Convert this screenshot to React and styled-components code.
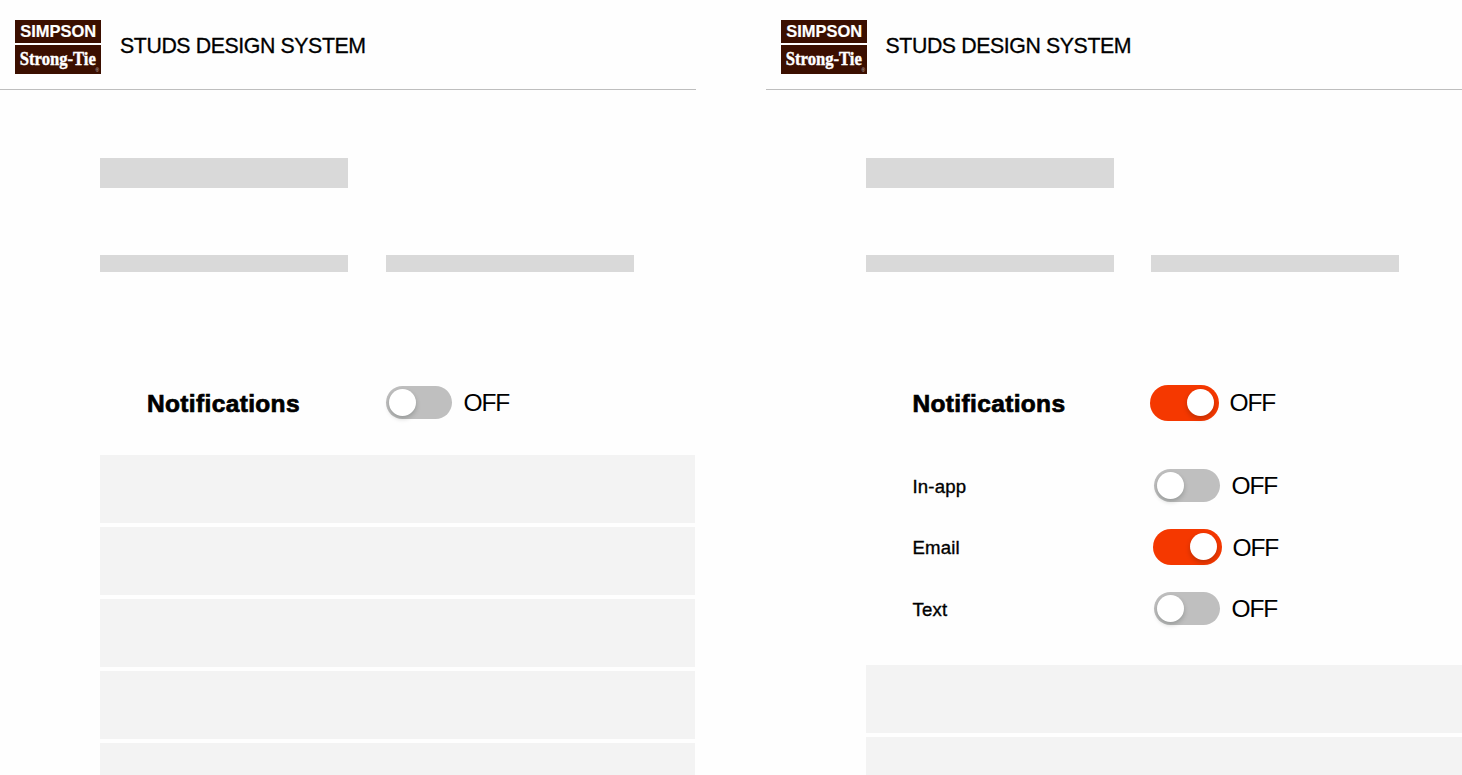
import React from 'react';
import styled, { createGlobalStyle } from 'styled-components';

const GlobalStyle = createGlobalStyle`
  * { box-sizing: border-box; }
  body {
    margin: 0;
    background: #fefefe;
    color: #000;
    font-family: "Liberation Sans", Arial, sans-serif;
    overflow: hidden;
  }
`;

const Page = styled.main`
  display: flex;
  gap: 69.5px;
  width: 100vw;
  height: 100vh;
  overflow: hidden;
`;

const Panel = styled.section`
  flex: 0 0 696px;
  display: flex;
  flex-direction: column;
`;

const Header = styled.header`
  flex: none;
  display: flex;
  align-items: flex-start;
  height: 90px;
  padding: 20px 0 0 15px;
  border-bottom: 1px solid #bebebe;
`;

const LogoMark = styled.svg`
  display: block;
  flex: none;
`;

const Title = styled.h1`
  margin: 13px 0 0 19px;
  font-size: 21.3px;
  line-height: 26px;
  font-weight: 400;
  letter-spacing: -0.4px;
  white-space: nowrap;
  -webkit-text-stroke: 0.3px #000;
`;

const Content = styled.div`
  flex: none;
  padding: 68px 0 0 100px;
`;

const BarRow = styled.div`
  display: flex;
  gap: 37.5px;
  margin-bottom: ${(p) => p.$after}px;
`;

const Bar = styled.div`
  width: 248px;
  height: ${(p) => p.$height}px;
  background: #d9d9d9;
`;

const Setting = styled.div`
  display: grid;
  grid-template-columns: 237px 1fr;
  align-items: center;
  height: ${(p) => p.$height}px;
  padding-left: 47.5px;
`;

const Heading = styled.h2`
  margin: 2px 0 0 -0.5px;
  font-size: 24.5px;
  line-height: 30px;
  font-weight: 700;
  letter-spacing: 0.35px;
  -webkit-text-stroke: 0.7px #000;
`;

const Label = styled.span`
  margin: 3px 0 0 -0.5px;
  font-size: 18.6px;
  line-height: 24px;
  letter-spacing: 0.15px;
  -webkit-text-stroke: 0.35px #000;
`;

const Control = styled.div`
  display: flex;
  align-items: center;
  gap: ${(p) => (p.$on ? 10.5 : 11.5)}px;
  padding-left: ${(p) => p.$inset}px;
`;

const Track = styled.button`
  flex: none;
  display: flex;
  align-items: center;
  justify-content: ${(p) => (p.$on ? 'flex-end' : 'flex-start')};
  width: ${(p) => (p.$on ? 69 : 66)}px;
  height: ${(p) => (p.$on ? 36 : 33)}px;
  padding: 0 ${(p) => (p.$on ? 5 : 3)}px;
  border: 0;
  border-radius: 18px;
  background: ${(p) => (p.$on ? '#f53800' : '#bfbfbf')};
`;

const Knob = styled.span`
  width: 27px;
  height: 27px;
  border-radius: 50%;
  background: #fff;
  box-shadow: 0 2.5px 5px rgba(0, 20, 15, 0.22);
`;

const State = styled.span`
  margin-top: 1.5px;
  font-size: 24.5px;
  line-height: 30px;
  letter-spacing: -1.1px;
`;

const SubSettings = styled.div`
  padding-top: 18.5px;
  height: 229px;
`;

const Blocks = styled.div`
  display: flex;
  flex-direction: column;
  gap: 4.5px;
  width: ${(p) => p.$width}px;
  margin-top: ${(p) => p.$before}px;
`;

const Block = styled.div`
  height: 67.5px;
  background: #f3f3f3;
`;

function Logo() {
  return (
    <LogoMark width="86" height="54" viewBox="0 0 86 54" role="img" aria-label="Simpson Strong-Tie">
      <rect width="86" height="23" fill="#3b0f00" />
      <rect y="25" width="86" height="29" fill="#3b0f00" />
      <text x="5.2" y="17.4" fill="#fff" stroke="#fff" strokeWidth="0.2" fontFamily="Liberation Sans, sans-serif" fontWeight="700" fontSize="16.5" textLength="76" lengthAdjust="spacingAndGlyphs">SIMPSON</text>
      <text x="4.8" y="44.6" fill="#fff" stroke="#fff" strokeWidth="0.4" fontFamily="Liberation Serif, serif" fontWeight="700" fontSize="17.8" textLength="76" lengthAdjust="spacingAndGlyphs">Strong-Tie</text>
      <text x="80.6" y="52" fill="#d8cbc7" fontFamily="Liberation Sans, sans-serif" fontSize="4.8">®</text>
    </LogoMark>
  );
}

function Toggle({ on, inset = 0 }) {
  return (
    <Control $on={on} $inset={inset}>
      <Track type="button" role="switch" aria-checked={!!on} $on={on}>
        <Knob />
      </Track>
      <State>OFF</State>
    </Control>
  );
}

const channels = [
  { name: 'In-app', on: false },
  { name: 'Email', on: true },
  { name: 'Text', on: false },
];

function Screen({ enabled, blocks }) {
  return (
    <Panel>
      <Header>
        <Logo />
        <Title>STUDS DESIGN SYSTEM</Title>
      </Header>
      <Content>
        <BarRow $after={67}>
          <Bar $height={30} />
        </BarRow>
        <BarRow $after={97}>
          <Bar $height={17} />
          <Bar $height={17} />
        </BarRow>
        <Setting $height={67}>
          <Heading>Notifications</Heading>
          <Toggle on={enabled} inset={enabled ? 0 : 1.5} />
        </Setting>
        {enabled && (
          <SubSettings>
            {channels.map((c) => (
              <Setting key={c.name} $height={61.5}>
                <Label>{c.name}</Label>
                <Toggle on={c.on} inset={c.on ? 3 : 4} />
              </Setting>
            ))}
          </SubSettings>
        )}
        <Blocks $width={enabled ? 597 : 595} $before={enabled ? 0 : 19}>
          {Array.from({ length: blocks }, (_, i) => (
            <Block key={i} />
          ))}
        </Blocks>
      </Content>
    </Panel>
  );
}

export default function App() {
  return (
    <>
      <GlobalStyle />
      <Page>
        <Screen enabled={false} blocks={5} />
        <Screen enabled blocks={2} />
      </Page>
    </>
  );
}
